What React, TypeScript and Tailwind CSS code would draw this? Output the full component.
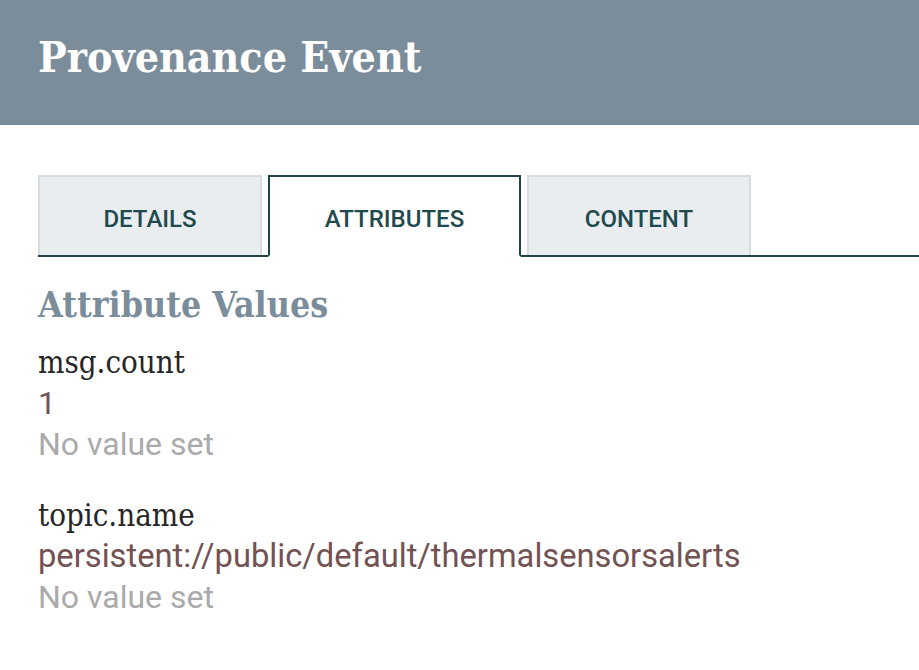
import React from "react";

const slab = { fontFamily: '"DejaVu Serif Condensed", "DejaVu Serif", serif' };

export default function App() {
  const roboto = "font-['Roboto',sans-serif]";
  const tab = `flex items-center justify-center pt-[5px] text-[#1f4a4e] text-[24px] font-medium ${roboto}`;
  return (
    <div className="w-[919px] h-[670px] bg-white overflow-hidden">
      <div className="h-[125px] bg-[#7b8d9b] flex items-center pl-[38px] pb-[11px]">
        <h1 className="text-white font-bold text-[42.5px] leading-none" style={slab}>
          Provenance Event
        </h1>
      </div>
      <div className="pl-[38px] pt-[50px]">
        <div className="flex items-end border-b-2 border-[#1e4447] h-[82px]">
          <div className={`w-[224px] h-[80px] bg-[#e9edf0] border-2 border-b-0 border-[#d6dde1] ${tab}`}>
            DETAILS
          </div>
          <div className={`ml-[6px] w-[253px] h-[82px] bg-white border-2 border-[#1e4447] border-b-white -mb-[2px] ${tab}`}>
            ATTRIBUTES
          </div>
          <div className={`ml-[6px] w-[224px] h-[80px] bg-[#e9edf0] border-2 border-b-0 border-[#d6dde1] ${tab}`}>
            CONTENT
          </div>
        </div>
        <div className="pt-[28px]">
          <h2 className="text-[#7b8d9b] font-bold text-[35.5px] leading-[40px]" style={slab}>
            Attribute Values
          </h2>
          <div className="mt-[17px]">
            <div className="text-[#262626] text-[31px] leading-[40px]" style={slab}>msg.count</div>
            <div className={`text-[#725252] text-[32px] leading-[42px] ${roboto}`}>1</div>
            <div className={`text-[#aaaaaa] text-[32px] leading-[40px] ${roboto}`}>No value set</div>
          </div>
          <div className="mt-[31px]">
            <div className="text-[#262626] text-[31px] leading-[40px]" style={slab}>topic.name</div>
            <div className={`text-[#725252] text-[32.7px] leading-[42px] ${roboto}`}>persistent://public/default/thermalsensorsalerts</div>
            <div className={`text-[#aaaaaa] text-[32px] leading-[40px] ${roboto}`}>No value set</div>
          </div>
        </div>
      </div>
    </div>
  );
}
